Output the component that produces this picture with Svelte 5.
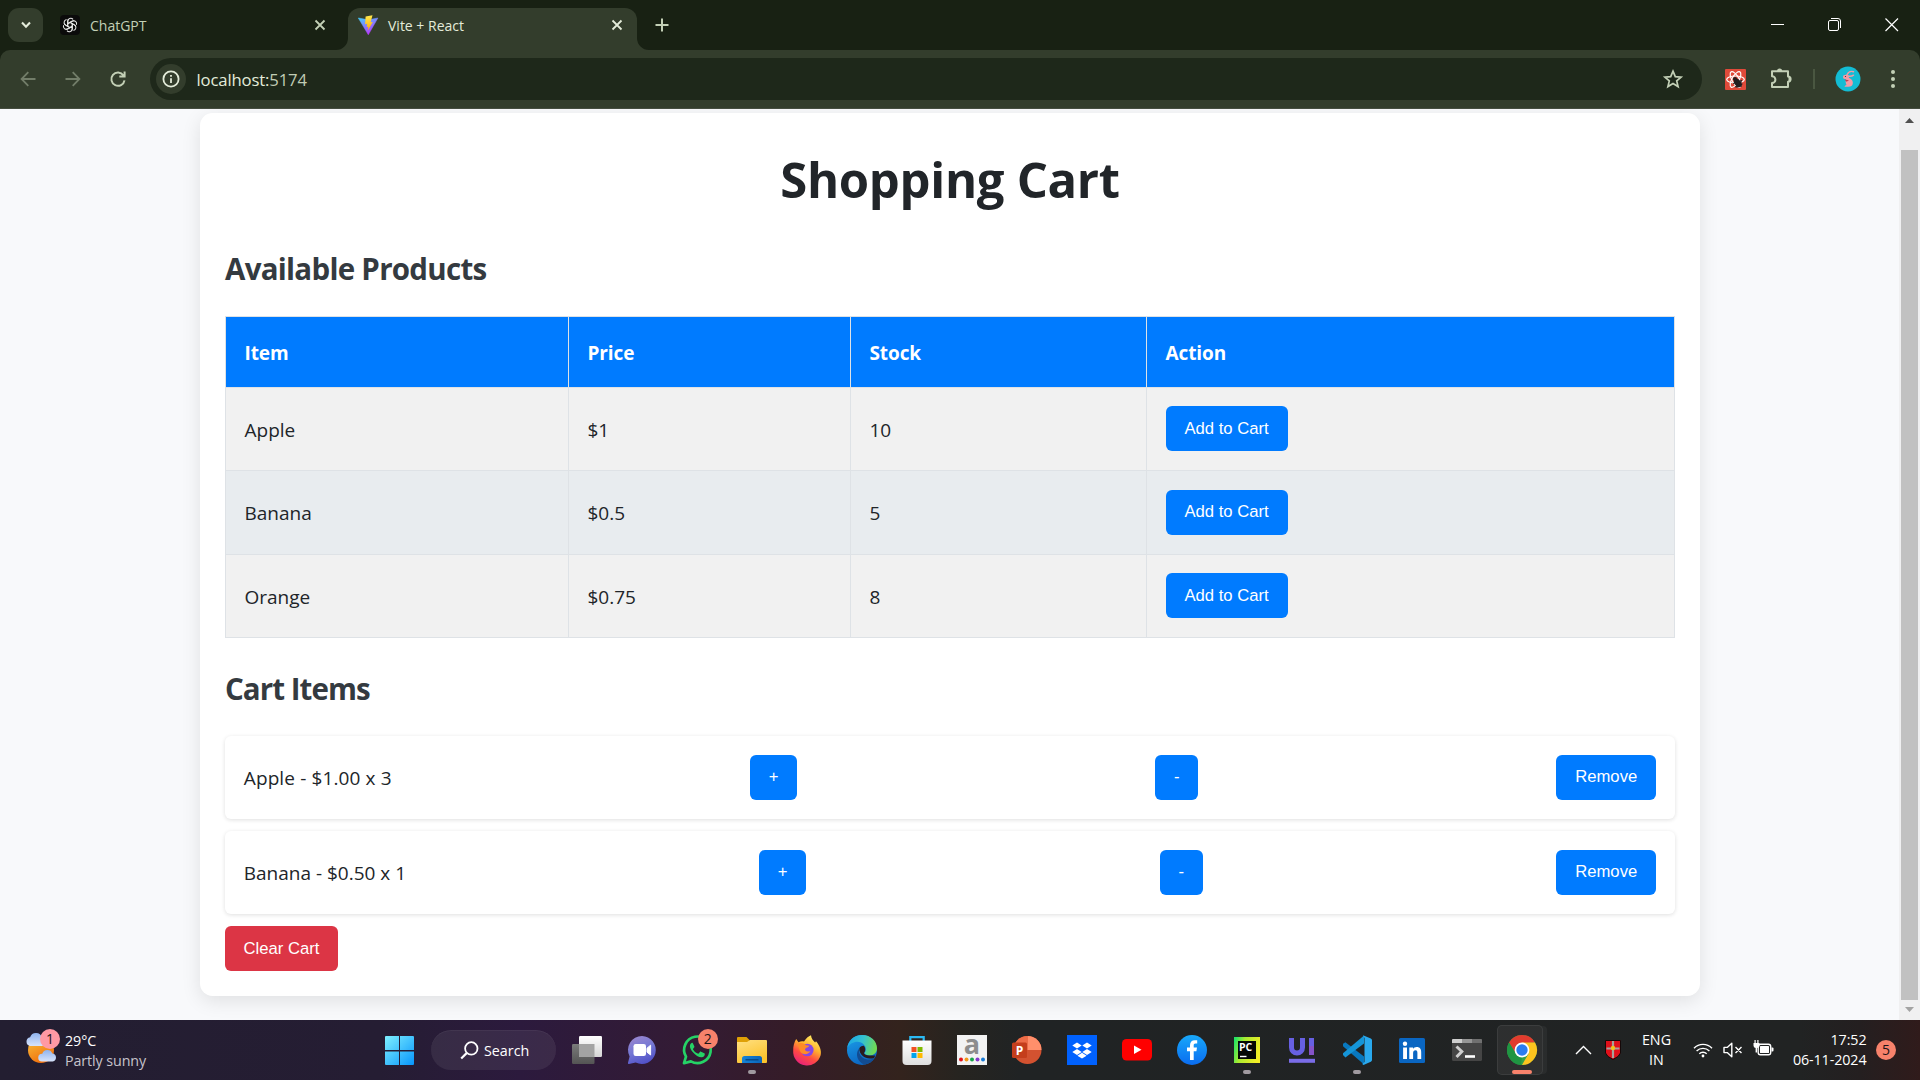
<script>
  const products = [
    { name: 'Apple', price: '$1', stock: 10 },
    { name: 'Banana', price: '$0.5', stock: 5 },
    { name: 'Orange', price: '$0.75', stock: 8 }
  ];
  const cart = [
    { label: 'Apple - $1.00 x 3', cls: 'apple' },
    { label: 'Banana - $0.50 x 1', cls: 'banana' }
  ];
  const petals = [0, 60, 120, 180, 240, 300];
</script>

<div class="screen">
  <header class="tabs">
    <div class="tab-menu">
      <svg width="12" height="10" viewBox="0 0 12 10"><path d="M2 2.5 6 6.7 10 2.5" fill="none" stroke="#e4ecda" stroke-width="2.1" /></svg>
    </div>
    <div class="tab idle">
      <svg width="20" height="20" viewBox="0 0 20 20">
        <rect width="20" height="20" rx="4" fill="#0b0b0b" />
        <g fill="none" stroke="#e6e6e6" stroke-width="1.05" stroke-linejoin="round">
          {#each petals as a}
            <path transform="rotate({a} 10 10)" d="M7.7 11.4V6.2a3 3 0 0 1 5.3-1.9M7.7 8.7l4.4-2.5a3 3 0 0 1 2.2-.3" />
          {/each}
        </g>
      </svg>
      <span class="tab-title">ChatGPT</span>
      <svg width="12" height="12" viewBox="0 0 12 12"><path d="M1.5 1.5 10.5 10.5M10.5 1.5 1.5 10.5" stroke="#c3d0b6" stroke-width="1.8" /></svg>
    </div>
    <div class="tab active">
      <svg class="foot left" width="12" height="12" viewBox="0 0 12 12"><path d="M12 0V12H0A12 12 0 0 0 12 0Z" fill="#333d2c" /></svg>
      <svg width="20" height="20" viewBox="0 0 20 20">
        <defs>
          <linearGradient id="vp" x1="0" y1="0" x2=".55" y2="1"><stop stop-color="#41d1ff" /><stop offset="1" stop-color="#bd34fe" /></linearGradient>
          <linearGradient id="vy" x1=".5" y1="0" x2=".6" y2="1"><stop stop-color="#ffea50" /><stop offset="1" stop-color="#ffa800" /></linearGradient>
        </defs>
        <path d="M.3 3 10.3 19.8 19.9 3 10.5 4.8Z" fill="url(#vp)" stroke="url(#vp)" stroke-width=".5" stroke-linejoin="round" />
        <path d="M14.5.2 7.6 1.5 7.1 9.2 9.2 8.8 8.7 12.1 10.3 11.7 9.7 15.8 14.8 6.9 12.6 7.3Z" fill="url(#vy)" />
      </svg>
      <span class="tab-title">Vite + React</span>
      <svg width="12" height="12" viewBox="0 0 12 12"><path d="M1.5 1.5 10.5 10.5M10.5 1.5 1.5 10.5" stroke="#e4ecda" stroke-width="1.8" /></svg>
      <svg class="foot right" width="12" height="12" viewBox="0 0 12 12"><path d="M0 0V12H12A12 12 0 0 1 0 0Z" fill="#333d2c" /></svg>
    </div>
    <svg class="plus" width="14" height="14" viewBox="0 0 14 14"><path d="M7 .5V13.5M.5 7H13.5" stroke="#c3d0b6" stroke-width="2" /></svg>
    <div class="window-buttons">
      <svg width="14" height="14" viewBox="0 0 14 14"><path d="M0 6.5H13" stroke="#fff" /></svg>
      <svg width="14" height="14" viewBox="0 0 14 14" fill="none" stroke="#fff"><rect x=".5" y="2.5" width="10" height="10" rx="1.5" /><path d="M3 .5H10a2.5 2.5 0 0 1 2.5 2.5V10" /></svg>
      <svg width="14" height="14" viewBox="0 0 14 14"><path d="M.5.5 13 13M13 .5.5 13" stroke="#fff" stroke-width="1.2" /></svg>
    </div>
  </header>

  <div class="toolbar-wrap">
    <div class="toolbar">
      <div class="nav">
        <svg width="16" height="16" viewBox="0 0 16 16" fill="none" stroke="#727d69" stroke-width="1.8"><path d="M15.5 8H2M8.3 1.2 1.6 8 8.3 14.8" /></svg>
        <svg width="16" height="16" viewBox="0 0 16 16" fill="none" stroke="#727d69" stroke-width="1.8"><path d="M.5 8H14M7.7 1.2 14.4 8 7.7 14.8" /></svg>
        <svg width="16" height="16" viewBox="0 0 16 16" fill="none" stroke="#c3d0b6" stroke-width="2"><path d="M13.4 4.4A6.6 6.6 0 1 0 14.5 9.3M14.6.6V5.6H9.3" /></svg>
      </div>
      <div class="address">
        <span class="info"><svg width="18" height="18" viewBox="0 0 18 18" fill="none" stroke="#e4ecda" stroke-width="1.8"><circle cx="9" cy="9" r="7.6" /><path d="M9 8.2V13M9 4.9V6.7" /></svg></span>
        <span class="url">localhost:<i>5174</i></span>
        <svg width="20" height="20" viewBox="0 0 20 20" fill="none" stroke="#c3d0b6" stroke-width="1.7"><path d="M10 2.1 12.3 7.6 18.1 8.1 13.7 11.9 15.1 17.6 10 14.5 4.9 17.6 6.3 11.9 1.9 8.1 7.7 7.6Z" /></svg>
      </div>
      <svg class="react" width="21" height="21" viewBox="0 0 21 21">
        <rect width="21" height="21" rx="1" fill="#e04a3a" />
        <g fill="none" stroke="#fff" stroke-width="1.2"><ellipse cx="10.5" cy="10.5" rx="8.8" ry="3.5" /><ellipse cx="10.5" cy="10.5" rx="8.8" ry="3.5" transform="rotate(60 10.5 10.5)" /><ellipse cx="10.5" cy="10.5" rx="8.8" ry="3.5" transform="rotate(120 10.5 10.5)" /></g>
        <ellipse cx="12.8" cy="14" rx="3.2" ry="4.7" transform="rotate(-35 12.8 14)" fill="#231f20" />
        <circle cx="10" cy="10" r="2.1" fill="#231f20" /><path d="M8 14.5 17 11.5M10 18 17.5 15M12 10.5V19M16 11V18" stroke="#231f20" />
      </svg>
      <svg class="puzzle" width="22" height="22" viewBox="0 0 22 22">
        <path d="M2 3.200H18V8.500A2.600 2.600 0 0 1 18 13.700V19H2V15.100A3.400 3.400 0 0 0 2 8.300Z" fill="none" stroke="#c3d0b6" stroke-width="2" stroke-linejoin="round" />
        <path d="M7 3a2.600 2.600 0 0 1 5.200 0ZM18.500 8.500a2.600 2.600 0 0 1 0 5.200Z" fill="#c3d0b6" />
      </svg>
      <span class="divider"></span>
      <svg class="avatar" width="26" height="26" viewBox="0 0 26 26">
        <circle cx="13" cy="13" r="12.5" fill="#13bcd4" />
        <path d="M18.500 5.800C16.500 5 13.500 5.500 12 8.700M18.500 9.200C16.500 10.700 14.500 10.500 12.500 10" fill="none" stroke="#f29aa5" stroke-width="1.500" stroke-linecap="round" />
        <ellipse cx="11" cy="11" rx="3" ry="2.200" fill="#f29aa5" />
        <path d="M11.500 11.500C15 11.500 18.300 14 17.800 17.500 17.500 19.800 16 20.700 13.500 20.700H9.500C10 19.500 10.500 19.300 11.500 19 10.300 16.800 10.500 14.500 11.500 11.500Z" fill="#f29aa5" />
        <path d="M9.500 13.500 14 14.300 11.500 15.800Z" fill="#c33b50" /><circle cx="10.5" cy="10.5" r=".6" fill="#333" />
      </svg>
      <svg class="dots" width="4" height="18" viewBox="0 0 4 18" fill="#c3d0b6"><circle cx="2" cy="2" r="2" /><circle cx="2" cy="9" r="2" /><circle cx="2" cy="16" r="2" /></svg>
    </div>
  </div>

  <div class="viewport">
    <main class="page">
      <section class="container">
        <h1><span>Shopping Cart</span></h1>
        <h2 class="h-products">Available Products</h2>
        <table>
          <colgroup><col class="c1" /><col class="c2" /><col class="c3" /><col class="c4" /></colgroup>
          <thead><tr><th>Item</th><th>Price</th><th>Stock</th><th>Action</th></tr></thead>
          <tbody>
            {#each products as p}
              <tr><td>{p.name}</td><td>{p.price}</td><td>{p.stock}</td><td class="action"><button>Add to Cart</button></td></tr>
            {/each}
          </tbody>
        </table>
        <h2 class="h-cart">Cart Items</h2>
        <ul>
          {#each cart as item}
            <li><span class={item.cls}>{item.label}</span><button class="inc">+</button><button class="dec">-</button><button class="remove">Remove</button></li>
          {/each}
        </ul>
        <button class="clear">Clear Cart</button>
      </section>
    </main>
    <aside class="scrollbar">
      <svg width="9" height="5" viewBox="0 0 9 5"><path d="M4.5 0 9 5H0Z" fill="#505050" /></svg>
      <div class="thumb"></div>
      <svg width="9" height="5" viewBox="0 0 9 5"><path d="M4.5 5 9 0H0Z" fill="#a3a3a3" /></svg>
    </aside>
  </div>

  <footer class="taskbar">
    <div class="weather">
      <svg width="40" height="40" viewBox="0 0 40 40">
        <defs>
          <linearGradient id="sun" x1=".2" y1="0" x2=".7" y2="1"><stop stop-color="#f8bd3a" /><stop offset="1" stop-color="#f06a0a" /></linearGradient>
          <linearGradient id="cloud" x1="0" y1="0" x2="0" y2="1"><stop stop-color="#8fb3ee" /><stop offset="1" stop-color="#d8e4fb" /></linearGradient>
        </defs>
        <circle cx="18" cy="20" r="13" fill="url(#sun)" />
        <path d="M7 16a4.500 4.500 0 0 1 .1-8.800A6.200 6.200 0 0 1 19 7.500 4.300 4.300 0 0 1 19 16Z" fill="url(#cloud)" />
        <path d="M19 31.500a3.900 3.900 0 0 1 .3-7.800 5.300 5.300 0 0 1 10-.3 4.100 4.100 0 0 1 .4 8.100Z" fill="url(#cloud)" />
      </svg>
      <span class="badge pink">1</span>
      <div class="weather-text"><span>29°C</span><em>Partly sunny</em></div>
    </div>

    <svg class="win" width="30" height="30" viewBox="0 0 30 30">
      <defs><linearGradient id="wn" x1="0" y1="0" x2="29" y2="29" gradientUnits="userSpaceOnUse"><stop stop-color="#7ff0ff" /><stop offset="1" stop-color="#0795fb" /></linearGradient></defs>
      <path d="M1 0H14V14H0V1a1 1 0 0 1 1-1ZM15 0H28a1 1 0 0 1 1 1V14H15ZM0 15.500H14V29H1a1 1 0 0 1-1-1ZM15 15.500H29V28a1 1 0 0 1-1 1H15Z" fill="url(#wn)" />
    </svg>
    <div class="search">
      <svg width="19" height="19" viewBox="0 0 19 19" fill="none" stroke="#fff" stroke-width="1.8"><circle cx="11.3" cy="7.4" r="6.2" /><path d="M6.900 11.900 1.200 17.500" stroke-width="2.2" /></svg>
      <span>Search</span>
    </div>

    <div class="apps">
      <div class="app">
        <svg width="30" height="30" viewBox="0 0 30 30">
          <defs><linearGradient id="tv" x1="0" y1="0" x2="0" y2="1"><stop stop-color="#fff" /><stop offset="1" stop-color="#d5d5d5" /></linearGradient><linearGradient id="tg" x1="0" y1="0" x2="0" y2="1"><stop stop-color="#7a7a7a" /><stop offset="1" stop-color="#545454" /></linearGradient></defs>
          <rect x="0" y="9" width="22.5" height="20" rx="1.2" fill="url(#tg)" /><rect x="7" y="1" width="23" height="21" rx="1.2" fill="url(#tv)" /><path d="M7 9H22.500V22H8a1 1 0 0 1-1-1Z" fill="#a3a3a3" />
        </svg>
      </div>
      <div class="app">
        <svg width="30" height="30" viewBox="0 0 30 30">
          <defs><linearGradient id="mt" x1=".2" y1="0" x2=".6" y2="1"><stop stop-color="#9b87cf" /><stop offset=".5" stop-color="#7477d4" /><stop offset="1" stop-color="#5050c8" /></linearGradient></defs>
          <path d="M15 1a14 14 0 1 1-6.300 26.600L2 29a1 1 0 0 1-1-1.300L2.600 21.500A14 14 0 0 1 15 1Z" fill="url(#mt)" />
          <rect x="6.5" y="9" width="12.5" height="12" rx="2.2" fill="#fff" /><path d="M20 13.200 23.600 10.200V20L20 17.200Z" fill="#fff" stroke="#fff" stroke-linejoin="round" />
        </svg>
      </div>
      <div class="app">
        <svg width="30" height="30" viewBox="0 0 30 30">
          <path d="M2 28.200 4 21.600A13.300 13.300 0 1 1 8.900 26.400Z" fill="none" stroke="#25d366" stroke-width="2.7" stroke-linejoin="round" />
          <path d="M10.700 7.900c-.5-.2-1.300.1-1.800.6-1.800 1.900-1.100 5.100 1.800 8.500 3.200 3.900 6.500 5.600 9.200 5.300 1.300-.2 2.800-1.300 2.900-3.100 0-.5-.1-.7-.5-.9l-3.300-1.600c-.5-.2-.8-.1-1.100.3l-1.300 1.500c-.3.3-.6.3-1 .1-2-.9-3.500-2.300-4.500-4.100-.2-.4-.1-.6.2-.9l1-1.400c.1-.3.1-.6 0-.9Z" fill="#25d366" />
        </svg>
        <span class="badge coral">2</span>
      </div>
      <div class="app running">
        <svg width="30" height="30" viewBox="0 0 30 30">
          <defs><linearGradient id="fd" x1="0" y1="0" x2=".5" y2="1"><stop stop-color="#ffe082" /><stop offset="1" stop-color="#fcc32d" /></linearGradient><linearGradient id="fb2" x1="0" y1="0" x2="1" y2="0"><stop stop-color="#1684d6" /><stop offset="1" stop-color="#0a63b8" /></linearGradient></defs>
          <path d="M0 9V3a1 1 0 0 1 1-1H9.500L13 5.500V9Z" fill="#dfa006" /><path d="M0 7H10L13 5H29a1 1 0 0 1 1 1V27a1 1 0 0 1-1 1H1a1 1 0 0 1-1-1Z" fill="url(#fd)" />
          <path d="M5 28V23.500a2.500 2.500 0 0 1 2.500-2.500h15a2.500 2.500 0 0 1 2.500 2.500V28Z" fill="url(#fb2)" /><path d="M8.500 24.800H21.500" stroke="#05437f" stroke-width="1.3" />
        </svg>
      </div>
      <div class="app">
        <svg width="30" height="30" viewBox="0 0 30 30">
          <defs><linearGradient id="ff" x1=".8" y1="0" x2=".3" y2="1"><stop stop-color="#fff36d" /><stop offset=".38" stop-color="#ffb52e" /><stop offset=".68" stop-color="#ff4b42" /><stop offset="1" stop-color="#e8207c" /></linearGradient></defs>
          <path d="M4.200 4 6.500 7.200C8.500 6.200 10.500 6 12 6.600 13.800 3.500 16.500 1.300 19 .3c.2 3.600 2.300 5 4.100 7.200L24 6.300c3.600 4.200 5.700 9.200 4.700 13.800A14 14 0 0 1 1.200 15.500C1 11.500 2.200 7 4.200 4Z" fill="url(#ff)" />
          <circle cx="15.3" cy="15" r="6.3" fill="#8547e5" /><path d="M5.500 9c2.500-1.500 6-1.300 8.500 1.200l3.300.5c-.5 1.800-3.800 1.700-4.300 3.600.4 2.400 3.200 2.900 5.600 1.400-1.700 3.700-6.700 4.600-9.700 1.800C7.600 16 7 12.300 5.500 9Z" fill="#ff8b28" />
        </svg>
      </div>
      <div class="app">
        <svg width="30" height="30" viewBox="0 0 30 30">
          <defs><linearGradient id="e1" x1="0" y1=".3" x2="1" y2=".5"><stop stop-color="#1aa7e7" /><stop offset=".5" stop-color="#35c1cf" /><stop offset="1" stop-color="#72dc4e" /></linearGradient><linearGradient id="e2" x1=".2" y1="0" x2=".6" y2="1"><stop stop-color="#1a9de8" /><stop offset="1" stop-color="#0b62bf" /></linearGradient></defs>
          <circle cx="15" cy="15" r="15" fill="url(#e2)" />
          <path d="M.2 13C1.200 5.300 7.300 0 15 0c9 0 15 6.500 15 13.200 0 4.300-3.200 7.200-7.200 7.200-4 0-5.600-1.500-5.100-2.600 1.900-2.500 1.500-5.600-.5-7.900C12.700 4.700 4 6.300.2 13Z" fill="url(#e1)" />
          <path d="M12 13.500c-4.300 5.500-1.400 13.600 5.500 16.200 4.200-.7 8-3.200 10-6.700-3.300 2.100-8.500 2.200-12-.5-2.700-2.200-4-5.600-3.500-9Z" fill="#124c92" />
          <path d="M12.300 13.500c.8-2 3-3 4.800-2.600 1.600 2.500 1.600 5-.2 7 .2 1.700 3 2.700 6 2.500h5.300l-1.100 2.500c-7 2.300-15-2-14.800-9.400Z" fill="#2a1a1d" />
        </svg>
      </div>
      <div class="app">
        <svg width="30" height="30" viewBox="0 0 30 30">
          <defs><linearGradient id="st" x1="0" y1="0" x2="0" y2="1"><stop stop-color="#fff" /><stop offset="1" stop-color="#dedede" /></linearGradient></defs>
          <path d="M8.300 7V2.200h13.400V7" fill="none" stroke="#2bbaf4" stroke-width="2.2" /><path d="M.5 5.500h29V26a4 4 0 0 1-4 4h-21a4 4 0 0 1-4-4Z" fill="url(#st)" />
          <rect x="9.5" y="12" width="5" height="5" fill="#f25022" /><rect x="15.5" y="12" width="5" height="5" fill="#7fba00" /><rect x="9.5" y="18" width="5" height="5" fill="#00a4ef" /><rect x="15.5" y="18" width="5" height="5" fill="#ffb900" />
        </svg>
      </div>
      <div class="app">
        <svg width="30" height="30" viewBox="0 0 30 30"><rect width="30" height="30" fill="#f3f3f3" /><text x="15" y="18.5" class="amazon">a</text><circle cx="4" cy="24.5" r="2" fill="#e4141c" /><circle cx="9.5" cy="24.5" r="2" fill="#f29a1b" /><circle cx="15" cy="24.5" r="2" fill="#18a54b" /><circle cx="20.5" cy="24.5" r="2" fill="#8638cc" /><circle cx="26" cy="24.5" r="2" fill="#187bd8" /></svg>
      </div>
      <div class="app">
        <svg width="30" height="30" viewBox="0 0 30 30"><circle cx="15.5" cy="15" r="14" fill="#d35230" /><path d="M15.500 1a14 14 0 0 1 14 14h-14Z" fill="#ff8f6b" /><path d="M15.500 1v14H1.500a14 14 0 0 1 14-14Z" fill="#ed6c47" /><rect x="0" y="7.5" width="15" height="15.5" rx="1.5" fill="#c43e1c" /><text x="7.6" y="19.5" class="ppt">P</text></svg>
      </div>
      <div class="app">
        <svg width="30" height="30" viewBox="0 0 30 30"><rect width="30" height="30" fill="#0061fe" /><path d="M10 7.500 14.700 10.500 10 13.500 5.300 10.500ZM20 7.500 24.700 10.500 20 13.500 15.300 10.500ZM10 14 14.700 17 10 20 5.300 17ZM20 14 24.700 17 20 20 15.300 17ZM15 17.800 19.600 20.700 15 23.600 10.400 20.700Z" fill="#fff" /></svg>
      </div>
      <div class="app">
        <svg width="30" height="30" viewBox="0 0 30 30"><rect y="4" width="30" height="21.5" rx="4.5" fill="#f00" /><path d="M12 10.500 19.500 14.800 12 19Z" fill="#fff" /></svg>
      </div>
      <div class="app">
        <svg width="30" height="30" viewBox="0 0 30 30"><defs><linearGradient id="fc" x1="0" y1="0" x2="0" y2="1"><stop stop-color="#18a8fa" /><stop offset="1" stop-color="#0a6cf0" /></linearGradient></defs><circle cx="15" cy="15" r="15" fill="url(#fc)" /><path d="M13 25V16.300H10V12.600H13V10.300C13 7 14.800 5.200 17.800 5.200h2.400V8.600H18.500c-1.400 0-1.800.8-1.800 1.800v2.200H20L19.400 16.300H16.700V25Z" fill="#fff" /></svg>
      </div>
      <div class="app running">
        <svg width="28" height="28" viewBox="0 0 28 28"><defs><linearGradient id="pc" x1="0" y1=".2" x2="1" y2=".5"><stop stop-color="#21e465" /><stop offset=".35" stop-color="#a9ea31" /><stop offset="1" stop-color="#f3ee26" /></linearGradient></defs><rect x="1" y="1" width="26" height="26" fill="url(#pc)" /><rect x="5" y="5" width="18" height="18" fill="#050805" /><text x="6" y="15" class="pc">PC</text><path d="M7 20.500H13.500" stroke="#fff" stroke-width="1.4" /></svg>
      </div>
      <div class="app">
        <svg width="28" height="28" viewBox="0 0 28 28"><path d="M3.500 2V11.500a5.500 5.500 0 0 0 11 0V2M23.500 2V19" fill="none" stroke="#6760e2" stroke-width="5" /><path d="M21 10H26V19H21Z" fill="#8553c8" /><path d="M1 24.800H27" stroke="#7a6ce8" stroke-width="4" /></svg>
      </div>
      <div class="app running">
        <svg width="30" height="30" viewBox="0 0 30 30"><path d="M1 8.700 3.400 7.300 22 21.500V29.500L1 11.300Z" fill="#0878bf" /><path d="M1 20 3.400 22.500 22 8.500V.5L1 18.300Z" fill="#1595d8" /><path d="M21 .2 28.800 3.500a2 2 0 0 1 1.200 1.800V25a2 2 0 0 1-1.200 1.700L21.500 30l-1.300-1L22.500 27V3Z" fill="#29a9ee" /></svg>
      </div>
      <div class="app">
        <svg width="28" height="28" viewBox="0 0 28 28"><rect x="1" y="2" width="26" height="25" rx="1.5" fill="#0a66c2" /><circle cx="7" cy="7.8" r="2.2" fill="#fff" /><path d="M5.100 11.500H9V23H5.100ZM11.300 11.500H15V13c.7-1.200 2-1.900 3.700-1.900 3.300 0 4.500 2.100 4.500 5.200V23H19.400V17c0-1.600-.3-2.800-1.900-2.800S15.100 15.400 15.100 17V23H11.300Z" fill="#fff" /></svg>
      </div>
      <div class="app">
        <svg width="30" height="30" viewBox="0 0 30 30"><rect y="4" width="30" height="22" rx="1.5" fill="#454545" /><path d="M0 8V5a1 1 0 0 1 1-1H10V8Z" fill="#cfcfcf" /><path d="M10 4H20V8H10Z" fill="#969696" /><path d="M20 4H29a1 1 0 0 1 1 1V8H20Z" fill="#707070" /><path d="M4.500 11.500 9.800 16.500 4.500 22" fill="none" stroke="#cfcfcf" stroke-width="3" /><path d="M13 21.500H23" stroke="#fff" stroke-width="2.6" /></svg>
      </div>
      <div class="app current">
        <svg width="30" height="30" viewBox="0 0 30 30">
          <circle cx="15" cy="15" r="15" fill="#34a048" /><path d="M2 7.500A15 15 0 0 1 28 7.500L15 8.500 9 18.500Z" fill="#e23b2e" /><path d="M15 7.500H28A15 15 0 0 1 15 30L21.500 18.800Z" fill="#fcc31e" /><path d="M2 7.500 8.500 18.500 15 22 14 30A15 15 0 0 1 2 7.500Z" fill="#1f9542" /><circle cx="15" cy="15" r="7.4" fill="#fff" /><circle cx="15" cy="15" r="5.7" fill="#2b7cf0" />
        </svg>
      </div>
    </div>

    <div class="tray">
      <svg class="chev" width="17" height="10" viewBox="0 0 17 10"><path d="M1 9 8.500 1.500 16 9" fill="none" stroke="#fff" stroke-width="1.4" /></svg>
      <svg class="shield" width="16" height="20" viewBox="0 0 16 20"><path d="M.5.500H15.500V13L13 16.500 8 19.500 3 16.500 .5 13Z" fill="#e0101a" stroke="#160808" /><path d="M8 1V18M1.500 8.500H14.500" stroke="#a8a29b" stroke-width="2.2" /><circle cx="8" cy="8" r="2.2" fill="#f1c41c" /></svg>
      <div class="lang"><span>ENG</span><span>IN</span></div>
      <svg class="wifi" width="20" height="16" viewBox="0 0 20 16" fill="none" stroke="#fff" stroke-width="1.4"><path d="M1 6.200a12.500 12.500 0 0 1 18 0M3.600 9a9 9 0 0 1 12.800 0M6.300 11.700a5.300 5.300 0 0 1 7.400 0" /><circle cx="10" cy="14" r="1.4" fill="#fff" stroke="none" /></svg>
      <svg class="vol" width="20" height="16" viewBox="0 0 20 16" fill="none" stroke="#fff" stroke-width="1.4"><path d="M1 5.400H4.200L8.800 1.300V14.700L4.200 10.600H1ZM12.500 5 18.500 11M18.500 5 12.500 11" stroke-linejoin="round" /></svg>
      <svg class="bat" width="21" height="17" viewBox="0 0 21 17"><rect x="5.2" y="4.2" width="12.5" height="10.6" rx="2.2" fill="none" stroke="#fff" stroke-width="1.4" /><rect x="7" y="6" width="9" height="7" rx=".5" fill="#fff" /><path d="M18.500 7.500h1a1 1 0 0 1 1 1v2a1 1 0 0 1-1 1h-1Z" fill="#fff" /><path d="M1.500 0V3H.500V5.500A2.500 2.500 0 0 0 2.600 8V12.500H4V8A2.500 2.500 0 0 0 6.500 5.500V3H5.500V0H4.300V3H2.700V0Z" fill="#fff" /></svg>
      <div class="clock"><span>17:52</span><span>06-11-2024</span></div>
      <span class="count">5</span>
    </div>
  </footer>
</div>

<style>
  :global(body) { margin: 0; }
  .screen { width: 1920px; height: 1080px; overflow: hidden; display: flex; flex-direction: column; font-family: 'Open Sans', 'Noto Sans', sans-serif; }
  svg { display: block; flex: none; overflow: visible; }

  .tabs { height: 50px; flex: none; background: #182113; display: flex; align-items: flex-start; box-sizing: border-box; padding: 8px 0 0 8px; }
  .tab-menu { width: 35px; height: 34px; border-radius: 11px; background: #333d2c; display: flex; align-items: center; justify-content: center; }
  .tab { height: 34px; display: flex; align-items: center; }
  .tab-title { flex: 1; margin-left: 10px; padding-top: 1px; font-size: 14px; line-height: 35px; white-space: nowrap; }
  .idle { width: 266px; margin-left: 17px; color: #c3d0b6; }
  .active { position: relative; height: 42px; width: 289px; margin-left: 22px; padding: 0 14px 8px 10px; box-sizing: border-box; border-radius: 12px 12px 0 0; background: #333d2c; color: #e4ecda; }
  .foot { position: absolute; bottom: 0; }
  .left { left: -12px; }
  .right { right: -12px; }
  .plus { margin: 10px 0 0 18px; }
  .window-buttons { margin: 10px 21px 0 auto; display: flex; gap: 43px; }

  .toolbar-wrap { height: 59px; flex: none; background: #182113; }
  .toolbar { height: 59px; box-sizing: border-box; background: #333d2c; border-bottom: 1px solid #454d3f; border-radius: 10px 10px 0 0; display: flex; align-items: center; padding-left: 19.5px; }
  .nav { display: flex; gap: 29px; width: 130.5px; }
  .address { width: 1552px; height: 42px; border-radius: 21px; background: #1e281a; display: flex; align-items: center; box-sizing: border-box; padding: 0 19.5px 0 6px; }
  .info { width: 30px; height: 30px; border-radius: 50%; background: #333d2c; display: flex; align-items: center; justify-content: center; }
  .url { margin-left: 10.5px; font-size: 16.7px; color: #e4ecda; flex: 1; letter-spacing: -.15px; }
  .url i { font-style: normal; color: #c0ccb4; }
  .react { margin-left: 23px; }
  .puzzle { margin-left: 24px; }
  .divider { width: 2px; height: 20px; margin-left: 21px; background: #4a5741; }
  .avatar { margin-left: 19.5px; }
  .dots { margin-left: 30px; }

  .viewport { height: 911px; flex: none; display: flex; background: #f8f9fb; overflow: hidden; }
  .page { width: 1899px; display: flex; justify-content: center; align-items: flex-start; padding-top: 4px; box-sizing: border-box; overflow: hidden; }
  .container { width: 1500px; height: 883px; box-sizing: border-box; padding: 0 25px; margin-left: 1px; background: #fff; border-radius: 12.5px; box-shadow: 0 5px 19px rgba(0, 0, 0, .1); color: #212529; }
  h1 { margin: 0; height: 125px; padding-top: 33px; box-sizing: border-box; font-size: 49px; line-height: 67px; letter-spacing: -.3px; text-align: center; white-space: nowrap; }
  h2 { margin: 0; font-size: 29.5px; line-height: 40px; letter-spacing: -.72px; color: #343a40; white-space: nowrap; }
  .h-products { height: 78px; padding-top: 11px; box-sizing: border-box; }
  table { width: 1450px; border-collapse: collapse; table-layout: fixed; font-size: 19px; line-height: 33px; }
  .c1 { width: 343px; } .c2 { width: 282px; } .c3 { width: 296px; } .c4 { width: 528px; }
  th, td { border: 1px solid #dee2e6; padding: 2px 18.5px 0; text-align: left; vertical-align: middle; box-sizing: border-box; }
  th { background: #007bff; color: #fff; height: 71px; font-weight: 700; letter-spacing: -.1px; }
  td { height: 83px; background: #f1f1f1; }
  .action { padding-top: 0; padding-bottom: 2px; }
  tr:nth-child(even) td { height: 84px; background: #e8ecef; }
  tr:nth-child(even) .action { padding-bottom: 0; }
  button { height: 45px; border: 0; border-radius: 6px; background: #007bff; color: #fff; font: 16.667px/19px 'Liberation Sans', Arial, sans-serif; padding: 0 0 2px; display: block; white-space: nowrap; }
  .action button { width: 122px; padding-bottom: 0; }
  tr:nth-child(even) .action button { padding-bottom: 2px; }
  .h-cart { height: 98px; padding-top: 31px; box-sizing: border-box; letter-spacing: -.95px; }
  ul { list-style: none; margin: 0; padding: 0; display: flex; flex-direction: column; gap: 12px; }
  li { height: 83px; box-sizing: border-box; padding: 0 18.75px; display: flex; justify-content: space-between; align-items: center; border-radius: 6px; box-shadow: 0 1px 4px rgba(0, 0, 0, .13); font-size: 19px; white-space: nowrap; }
  .apple { width: 148.2px; letter-spacing: .12px; }
  .banana { width: 161.7px; }
  .inc { width: 47.2px; } .dec { width: 43px; } .remove { width: 100px; }
  .clear { margin-top: 12px; background: #dc3545; width: 113px; padding-bottom: 0; }
  .scrollbar { width: 21px; background: #f0f0f1; display: flex; flex-direction: column; align-items: center; padding-top: 9px; box-sizing: border-box; }
  .thumb { width: 17px; height: 850px; margin: 27px 0 7px; background: #c1c1c1; }

  .taskbar { height: 60px; flex: none; display: flex; align-items: flex-start; color: #fff; font-size: 14.3px; background: linear-gradient(90deg, #231e31 0, #251d33 380px, #2c1a3d 520px, #331b35 680px, #351c28 790px, #33231d 900px, #262420 960px, #202324 1020px, #212323 1800px, #241f20 1860px, #301b1b 1920px); }
  .weather { position: relative; width: 385px; display: flex; }
  .weather svg { margin: 10px 0 0 23px; }
  .weather-text { display: flex; flex-direction: column; margin: 11px 0 0 2px; line-height: 20px; letter-spacing: -.1px; white-space: nowrap; }
  .weather-text em { font-style: normal; color: #c6c3cc; }
  .badge { position: absolute; width: 20px; height: 20px; border-radius: 50%; text-align: center; font-size: 14px; line-height: 20px; color: #1b1418; }
  .pink { left: 40px; top: 9px; background: #ff99a4; }
  .coral { left: 28px; top: 9px; background: #f7826b; }
  .win { margin-top: 16px; }
  .search { margin: 10px 0 0 16px; width: 125px; height: 40px; border-radius: 20px; background: rgba(255, 255, 255, .07); box-shadow: inset 0 1px rgba(255, 255, 255, .05); display: flex; align-items: center; padding-left: 29px; box-sizing: border-box; gap: 5px; }
  .apps { display: flex; margin-left: 3.8px; }
  .app { position: relative; width: 55px; height: 60px; display: flex; align-items: center; justify-content: center; }
  .running::after { content: ''; position: absolute; left: 23.5px; top: 50px; width: 8px; height: 4px; border-radius: 2px; background: #a09aa0; }
  .current::before { content: ''; position: absolute; left: 2px; top: 5px; width: 44px; height: 48px; border-radius: 5px; background: rgba(255, 255, 255, .06); border: 1px solid rgba(255, 255, 255, .07); box-shadow: 5px 0 0 -1px rgba(255, 255, 255, .045); }
  .current svg { position: relative; }
  .current::after { content: ''; position: absolute; left: 17.5px; top: 50px; width: 20px; height: 4px; border-radius: 2px; background: #f7826b; }
  .amazon { font: 700 27px/1 'Open Sans', sans-serif; fill: #8d8d8d; text-anchor: middle; }
  .ppt { font: 700 12px 'Open Sans', sans-serif; fill: #fff; text-anchor: middle; }
  .pc { font: 700 10.5px 'Open Sans', sans-serif; fill: #fff; }

  .tray { flex: 1; display: flex; height: 60px; align-items: flex-start; }
  .chev { margin: 25px 0 0 25.2px; }
  .shield { margin: 20px 0 0 13.5px; }
  .lang { width: 40px; margin: 10px 0 0 15px; display: flex; flex-direction: column; line-height: 20px; text-align: center; }
  .wifi { margin: 22px 0 0 17px; }
  .vol { margin: 22px 0 0 10px; }
  .bat { margin: 20px 0 0 10px; }
  .clock { width: 82px; margin: 10px 0 0 10px; display: flex; flex-direction: column; line-height: 20px; text-align: right; white-space: nowrap; letter-spacing: -.1px; }
  .count { margin: 20px 0 0 9.5px; width: 20px; height: 20px; border-radius: 50%; background: #f7826b; color: #1b1418; text-align: center; line-height: 20px; font-size: 14px; }
</style>
